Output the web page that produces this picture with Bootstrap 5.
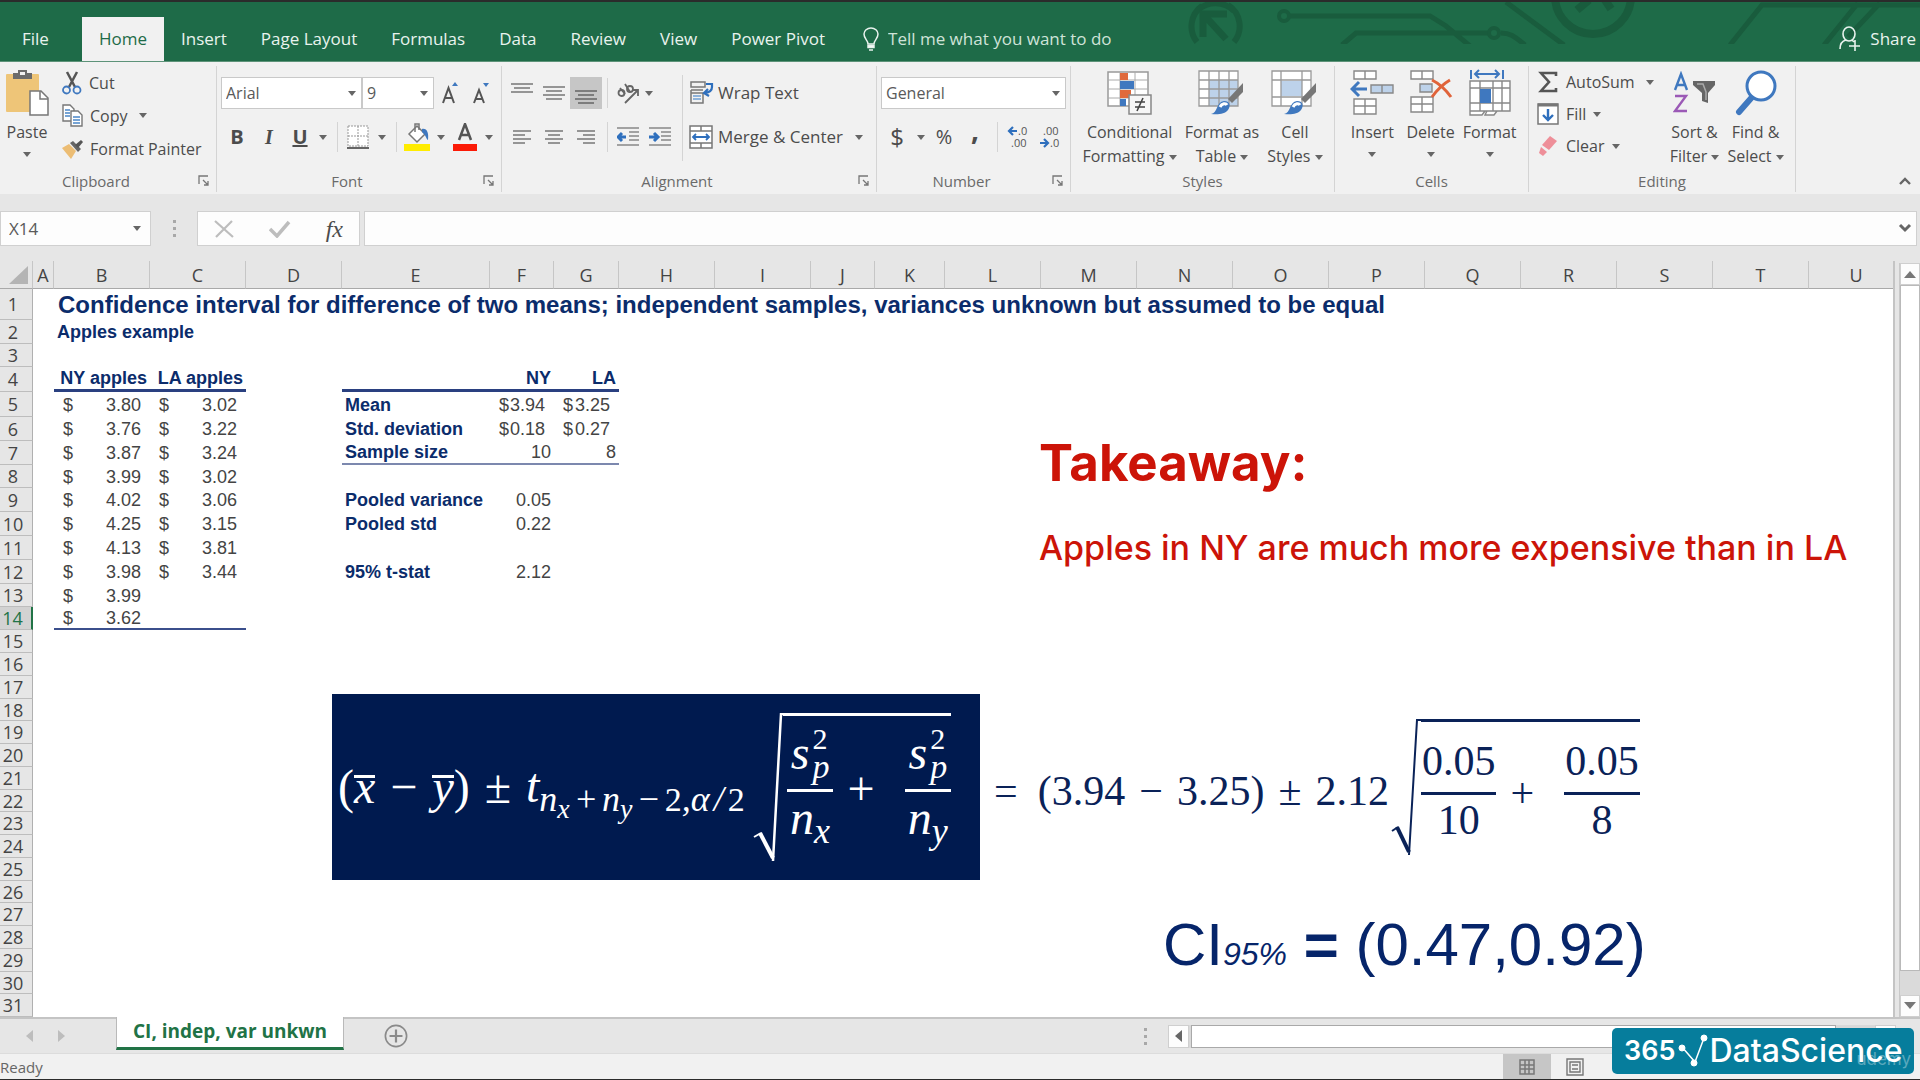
<!DOCTYPE html>
<html lang="en">
<head>
<meta charset="utf-8">
<meta name="viewport" content="width=device-width, initial-scale=1">
<title>Confidence interval workbook</title>
<link href="https://cdn.jsdelivr.net/npm/bootstrap@5.3.0/dist/css/bootstrap.min.css" rel="stylesheet">
<style>
:root{--ui:"Open Sans","Noto Sans",sans-serif;--sheet:"Liberation Sans",Arial,sans-serif;--math:"Liberation Serif","Times New Roman",serif;--navy:#0b2c6b}
body{font-family:var(--ui);font-size:16px;line-height:24px;color:#4c4c4c;background:#e6e6e6;min-height:100vh;overflow:hidden;border-top:2px solid #2b2b2b}
button{font:inherit;color:inherit;background:none;border:0;padding:0}
svg{display:block;flex:none}
/* title strip */
.topstrip{background:#1e6b48;height:60px;color:#e9f3ee;font-size:17px;border-bottom:1px solid #5d9379}
.topstrip .art{position:absolute;right:0;top:0}
.tabs{padding-top:15px;z-index:1}
.tabs .nav-link{color:inherit;padding:0 17px;line-height:44px;border-radius:0}
.tabs .nav-link.file{padding:0 33px 0 22px}
.tabs .nav-link.active{background:#f1f1f1;color:#1e6b48}
.tell{background:none;border:0;color:#cfe3d8;width:260px;padding:0;outline:0}
.tell::placeholder{color:#cfe3d8;opacity:1}
/* ribbon */
.ribbon{background:#f1f1f1;height:132px}
.grp{border-right:1px solid #d4d4d4;margin-top:4px;height:126px;display:flex;flex-direction:column}
.grp .tools{height:108px;display:flex}
.cap{line-height:22px;font-size:15px;color:#6a6a6a;display:flex}
.cap span{flex:1;text-align:center}
.launch{width:24px;display:flex;align-items:center;justify-content:center}
.g-clip{width:217px}.g-font{width:285px}.g-align{width:375px}.g-num{width:194px}.g-style{width:264px}.g-cells{width:194px}.g-edit{width:267px}
.w-paste{width:54px}.w-fontname{width:141px}.w-fontsize{width:72px}.w-fx{width:163px}
.dd{display:inline-block;border:4px solid transparent;border-top:5px solid #666;border-bottom:0;vertical-align:middle}
.big{display:flex;flex-direction:column;align-items:center;text-align:center;white-space:nowrap}
.big .ico{height:54px;display:flex;align-items:center}
.lines button{height:33px;display:flex;align-items:center;white-space:nowrap;gap:7px}
.lines.tight button{height:32px}
.two{padding-top:11px}
.r1{height:32px;display:flex;align-items:center}
.r2{height:40px;margin-top:8px;display:flex;align-items:center}
.w10,.w12,.w16,.w18,.w30,.w32{display:flex;align-items:center;justify-content:center;flex:none;height:32px}
.w10{width:10px}.w12{width:12px}.w16{width:16px}.w18{width:18px}.w30{width:30px}.w32{width:32px}
.vline::before{content:"";width:1px;height:30px;background:#d4d4d4}
.vline.tall::before{height:86px}
.picked{background:#c6c6c6}
.serif-i{font-family:var(--math);font-style:italic}
.wide-lab{font-size:17px}
.combo{position:relative}
.combo .form-select{font:16px var(--ui);height:32px;border:1px solid #c9c9c9;border-radius:0;background:#fff;padding:0 4px;color:#5a5a5a;appearance:none}
.combo .dd{position:absolute;right:6px;top:14px;pointer-events:none}
/* formula bar */
.fbar{padding:17px 3px 0 0;height:67px;align-items:flex-start}
.fbox{background:#fdfdfd;border:1px solid #d0d0d0;height:35px;border-radius:0}
.fbox.form-control{padding:0 8px;font-size:17px;color:#5a5a5a}
.fxbtn{font:italic 24px/30px var(--math)}
.namewrap{width:151px;position:relative}
.namewrap .dd{position:absolute;right:10px;top:15px}
.dots{width:46px;height:35px;display:flex;flex-direction:column;gap:4px;align-items:center;justify-content:center}
.dots i{width:3px;height:3px;background:#a8a8a8}
/* sheet */
.pane{border-right:2px solid #c4c4c4;margin-right:4px;overflow:hidden;background:#fff}
.cells{table-layout:fixed;width:100%;border-collapse:separate;border-spacing:0;font:18px/20px var(--sheet);color:#444}
.cells th{background:#e6e6e6;font-family:var(--ui);font-weight:400;color:#444;text-align:center;padding:0}
.cells thead th{height:28px;border-bottom:1px solid #a9a9a9;border-right:1px solid #c6c6c6}
.cells thead th:last-child{border-right:0;padding-left:10px}
.cells tbody th{border-right:1px solid #b0b0b0;border-bottom:1px solid #bdbdbd;padding-right:6px;line-height:18px}
.cells tbody th.on{background:#d2d2d2;color:#217346;border-right:2px solid #217346}
.cells td{padding:0 3px;white-space:nowrap;overflow:visible}
.h31{height:31px}.h25{height:25px}.h24{height:24px}.h23{height:23px}.h22{height:22px}
.cells td.t1{font-size:24px;font-weight:700;color:var(--navy);padding-left:4px}
.cells td.lab{font-weight:700;color:var(--navy)}
.cells td.r{text-align:right}
.cells td.acc{padding:0 9px}
.cells td.ul3{border-bottom:3px solid #2a4080}
.cells td.ul2{border-bottom:2px solid #7c88ae}
.cells td.ul1{border-bottom:2px solid #3b4f8c}
.c33{width:33px}.c21{width:21px}.c96{width:96px}.c148{width:148px}.c64{width:64px}.c65{width:65px}.c70{width:70px}
/* objects floating over the grid */
.takeaway{position:absolute;left:1039px;top:174px;color:#cc1408;font-family:Inter,"Open Sans",sans-serif;white-space:nowrap}
.takeaway h2{font-size:51px;line-height:56px;font-weight:700;margin:0 0 37px}
.takeaway p{font-size:34px;line-height:40px;font-weight:500;margin:0}
.eq{position:absolute;display:flex;align-items:center;font:42px/42px var(--math);white-space:nowrap}
.eq-sym{left:332px;top:433px;width:648px;height:186px;background:#001a4f;color:#fff;padding-left:6px;font-size:48px}
.eq-num{left:994px;top:458px;height:136px;color:#0a2258}
.it{font-style:italic}
.bar{display:inline-block;line-height:17px;border-top:3px solid}
.op{padding:0 14px}
.eq-sym>.op{padding:0 15px}
.sb{font-size:36px;line-height:0;vertical-align:-9px}
.sb2{font-size:28px;line-height:0;vertical-align:-7px}
.sop{padding:0 4px}
.dg{font-size:30px;font-style:normal}
.sb .dg{font-size:34px}
.rad{border-top:3px solid;display:flex;align-items:flex-start}
.rad .op{align-self:center}
.rad-s{height:148px}.rad-n{height:136px}
.frac{display:flex;flex-direction:column;align-items:center}
.frac .num{border-bottom:3px solid;align-self:stretch;display:flex;justify-content:center;align-items:center}
.frac .den{display:flex;align-items:center}
.rad-s .num{height:76px;padding:0 4px}.rad-s .den{height:52px}
.rad-n .num{height:73px;padding:8px 1px 0}.rad-n .den{height:50px}
.low{padding-top:8px}
.stk{display:flex;flex-direction:column;font-size:34px;line-height:28px;margin-left:3px}
.ci{position:absolute;left:1163px;top:650px;font:60px/68px var(--sheet);color:#06256a;white-space:nowrap}
.ci i{font-size:32px}
/* scroll bars */
.vs{width:21px;flex:none;margin-top:2px;background:#dadada;display:flex;flex-direction:column;border-left:1px solid #c9c9c9}
.vs button,.hs button{background:#fdfdfd;border:1px solid #cfcfcf;display:flex;align-items:center;justify-content:center}
.vs button{height:22px}
.vthumb{background:#fff;border:1px solid #b9b9b9;height:686px}
.vs .end{margin-top:auto}
.tabbar{height:36px;border-top:2px solid #c4c4c4}
.stab{margin-top:-2px;margin-left:22px;width:228px;height:33px;background:#fff;border-bottom:3px solid #217346;border-left:1px solid #b9b9b9;border-right:1px solid #b9b9b9;color:#217346;font-weight:700;font-size:19px;line-height:28px;text-align:center;text-decoration:none;white-space:nowrap}
.navarr{width:94px;padding-left:26px;gap:24px}
.hs{width:728px;height:23px;background:#d9d9d9}
.hs button{width:21px}
.hthumb{width:645px;background:#fff;border:1px solid #a9a9a9;margin-left:2px}
.status{background:#f1f1f1;height:27px;border-top:1px solid #dcdcdc;border-bottom:1px solid #2b2b2b;font-size:15px;color:#666}
.views{margin-right:321px}
.views button{width:48px;height:25px;display:flex;align-items:center;justify-content:center}
.mark365{position:absolute;right:6px;bottom:6px;width:302px;height:46px;background:#067d9c;border-radius:5px;color:#fff;font:600 27px/46px Inter,"Open Sans",sans-serif;display:flex;align-items:center;padding-left:12px;white-space:nowrap}
.mark365 b{font-size:32px;font-weight:500}
.ud{position:absolute;right:3px;bottom:4px;font:400 17px/22px Inter,sans-serif;color:rgba(255,255,255,.35)}
</style>
</head>
<body class="position-relative d-flex flex-column">

<header class="topstrip position-relative d-flex">
  <svg class="art" width="760" height="42" viewBox="1160 2 760 42" fill="none" stroke="#195c3d" stroke-width="5">
    <path d="M1197 42a25 25 0 0 1 5-36M1234 42a25 25 0 0 0-6-37M1198 10c10-9 26-9 36 1" stroke-width="6"/>
    <path d="M1203 37V14h24M1204 15l22 24" stroke-width="7"/>
    <circle cx="1284" cy="16" r="5" stroke-width="4"/><path d="M1289 16h141l16 10 24 20M1342 45l14-12h133M1501 33c10 0 14 4 24 12M1506 2l58 43"/>
    <circle cx="1494" cy="33" r="5" stroke-width="4"/><circle cx="1593" cy="-4" r="38" stroke-width="8"/>
    <path d="M1577 10l12-10M1605 0l6 9" stroke-width="8"/><path d="M1730 45l32-40h170M1824 45l34-42M1848 37l32-34"/>
  </svg>
  <ul class="nav tabs flex-nowrap">
    <li><a class="nav-link file" href="#">File</a></li><li><a class="nav-link active" href="#">Home</a></li><li><a class="nav-link" href="#">Insert</a></li><li><a class="nav-link" href="#">Page Layout</a></li><li><a class="nav-link" href="#">Formulas</a></li><li><a class="nav-link" href="#">Data</a></li><li><a class="nav-link" href="#">Review</a></li><li><a class="nav-link" href="#">View</a></li><li><a class="nav-link" href="#">Power Pivot</a></li>
  </ul>
  <label class="tabs d-flex align-items-center ps-3 ms-1 gap-2">
    <svg width="18" height="24" viewBox="0 0 16 24" fill="none" stroke="#e9f3ee" stroke-width="1.5"><path d="M5 17c0-4-4-5-4-10a7 6 0 0 1 14 0c0 5-4 6-4 10z"/><path d="M5 18.500h6v2H5zM6 23h4" fill="#fff"/></svg>
    <input class="tell" type="text" placeholder="Tell me what you want to do" aria-label="Tell me what you want to do">
  </label>
  <button class="tabs ms-auto d-flex align-items-center gap-2 pe-1" type="button">
    <svg width="24" height="26" viewBox="0 0 24 26" fill="none" stroke="#e9f3ee" stroke-width="1.600"><ellipse cx="11" cy="8" rx="6" ry="7"/><path d="M8 14c-4 1-6 4-6 9M14 14l2 2M17 14v11M11 20h11"/></svg>
    Share
  </button>
</header>

<section class="ribbon d-flex" aria-label="Ribbon">
  <div class="grp g-clip">
    <div class="tools">
      <button class="big w-paste" type="button"><span class="ico"><svg width="44" height="48" viewBox="0 0 44 48"><rect x="1" y="5" width="33" height="38" rx="1" fill="#eec578"/><path d="M8 4h5V1h9v3h5v6H8z" fill="#6b6b6b"/><rect x="15" y="3" width="5" height="3" fill="#f1f1f1"/><path d="M25 22h11l7 7v17H25z" fill="#fff" stroke="#777" stroke-width="1.500"/><path d="M35 22v8h8" fill="none" stroke="#777" stroke-width="1.500"/></svg></span>Paste<span class="dd mt-2"></span></button>
      <div class="lines ps-2">
        <button type="button"><svg width="20" height="24" viewBox="0 0 20 24" fill="none"><path d="M5 1l8 15M15 1L7 16" stroke="#555" stroke-width="2.500"/><circle cx="4.500" cy="19" r="3.500" stroke="#3f78bf" stroke-width="1.800"/><circle cx="15" cy="19" r="3.500" stroke="#3f78bf" stroke-width="1.800"/></svg>Cut</button>
        <button type="button"><svg width="21" height="24" viewBox="0 0 21 24" fill="#fff" stroke="#777" stroke-width="1.400"><path d="M1 1h7l4 4v12H1z"/><path d="M9 7h7l4 4v11H9z"/><path d="M3 6h5M3 9h5M3 12h5M11 13h7M11 16h7M11 19h7" stroke="#4b86c8"/></svg>Copy<span class="dd ms-1"></span></button>
        <button type="button"><svg width="21" height="20" viewBox="0 0 21 20"><path d="M0 9l7-4 7 7-5 8z" fill="#ecbd74"/><path d="M8 4l3-2 8 8-3 3z" fill="#666"/><path d="M13 6l6-5 2 2-5 6z" fill="#555"/></svg>Format Painter</button>
      </div>
    </div>
    <div class="cap"><span>Clipboard</span><button class="launch" type="button" aria-label="Clipboard settings"><svg width="12" height="12" viewBox="0 0 12 12" fill="none" stroke="#777" stroke-width="1.300"><path d="M1 9V1h9M5 5l5 5M10 6v4H6"/></svg></button></div>
  </div>

  <div class="grp g-font">
    <div class="tools flex-column two px-1">
      <div class="r1">
        <div class="combo w-fontname"><select class="form-select" aria-label="Font"><option>Arial</option></select><span class="dd"></span></div>
        <div class="combo w-fontsize"><select class="form-select" aria-label="Font size"><option>9</option></select><span class="dd"></span></div>
        <button class="w32" type="button" aria-label="Grow font"><svg width="18" height="24" viewBox="0 0 18 24" fill="none" stroke="#555" stroke-width="2"><path d="M2 22L7.500 7 13 22M4 17h7"/><path d="M11 5l3-4 3 4z" fill="#3f78bf" stroke="none"/></svg></button>
        <button class="w30" type="button" aria-label="Shrink font"><svg width="18" height="24" viewBox="0 0 18 24" fill="none" stroke="#555" stroke-width="2"><path d="M2 22L7 9l5 13M4 18h6"/><path d="M11 2h6l-3 4z" fill="#3f78bf" stroke="none"/></svg></button>
      </div>
      <div class="r2">
        <button class="w32 fw-bold fs-5" type="button">B</button><button class="w32 fs-5 fw-bold serif-i" type="button">I</button><button class="w30 fw-bold fs-5 text-decoration-underline" type="button">U</button><span class="w16"><i class="dd"></i></span><span class="w12 vline"></span>
        <button class="w30" type="button" aria-label="Borders"><svg width="22" height="24" viewBox="0 0 22 24" fill="#fff" stroke="#999"><path d="M1 1h20v20H1z" stroke-dasharray="2 1"/><path d="M11 1v20M1 11h20" stroke-dasharray="2 1"/><path d="M0 23h22" stroke="#666" stroke-width="2"/></svg></button><span class="w18"><i class="dd"></i></span><span class="w10 vline"></span>
        <button class="w32" type="button" aria-label="Fill colour"><svg width="26" height="28" viewBox="0 0 26 28"><path d="M5 11l8-8 8 8-8 8z" fill="#fff" stroke="#777" stroke-width="1.500"/><path d="M11 9V1h4v6" fill="none" stroke="#777" stroke-width="1.500"/><path d="M18 6c5-1 7 4 6 11-2-1-2-5-6-8z" fill="#3f78bf"/><path d="M0 21h26v7H0z" fill="#ffec00"/></svg></button><span class="w16"><i class="dd"></i></span>
        <button class="w32" type="button" aria-label="Font colour"><svg width="24" height="28" viewBox="0 0 24 28"><path d="M6 17l6-16 6 16M8 12h8" fill="none" stroke="#555" stroke-width="2.500"/><path d="M0 21h24v7H0z" fill="#fb1a06"/></svg></button><span class="w16"><i class="dd"></i></span>
      </div>
    </div>
    <div class="cap"><span>Font</span><button class="launch" type="button" aria-label="Font settings"><svg width="12" height="12" viewBox="0 0 12 12" fill="none" stroke="#777" stroke-width="1.300"><path d="M1 9V1h9M5 5l5 5M10 6v4H6"/></svg></button></div>
  </div>

  <div class="grp g-align">
    <div class="tools ps-1">
      <div class="two">
        <div class="r1">
          <button class="w32" type="button" aria-label="Top align"><svg width="22" height="20" viewBox="0 0 22 20" stroke="#777" stroke-width="1.600"><path d="M0 1h22M3 5h16M0 9h22"/></svg></button>
          <button class="w32" type="button" aria-label="Middle align"><svg width="22" height="20" viewBox="0 0 22 20" stroke="#777" stroke-width="1.600"><path d="M0 4h22M3 8h16M0 12h22M3 16h16"/></svg></button>
          <button class="w32 picked" type="button" aria-label="Bottom align"><svg width="22" height="22" viewBox="0 0 22 22" stroke="#666" stroke-width="1.600"><path d="M0 9h22M3 13h16M0 17h22M3 21h16"/></svg></button>
          <span class="w10 vline"></span>
          <button class="w32" type="button" aria-label="Orientation"><svg width="24" height="24" viewBox="0 0 24 24" fill="none" stroke="#666" stroke-width="1.800"><circle cx="5.500" cy="12" r="3"/><path d="M4 7l5 6M9 3l5 8"/><circle cx="14" cy="8" r="3"/><path d="M9 22L22 9M16 9h6v6"/></svg></button><span class="w10"><i class="dd"></i></span>
        </div>
        <div class="r2">
          <button class="w32" type="button" aria-label="Align left"><svg width="18" height="14" viewBox="0 0 18 14" stroke="#777" stroke-width="1.600"><path d="M0 1h18M0 5h12M0 9h18M0 13h12"/></svg></button>
          <button class="w32" type="button" aria-label="Center"><svg width="18" height="14" viewBox="0 0 18 14" stroke="#777" stroke-width="1.600"><path d="M0 1h18M3 5h12M0 9h18M3 13h12"/></svg></button>
          <button class="w32" type="button" aria-label="Align right"><svg width="18" height="14" viewBox="0 0 18 14" stroke="#777" stroke-width="1.600"><path d="M0 1h18M6 5h12M0 9h18M6 13h12"/></svg></button>
          <span class="w10 vline"></span>
          <button class="w32" type="button" aria-label="Decrease indent"><svg width="22" height="20" viewBox="0 0 22 20" stroke="#888" stroke-width="1.600"><path d="M0 1h22M12 5h10M12 9h10M12 13h10M0 18h22"/><path d="M1 10h8M5 6l-4 4 4 4" fill="none" stroke="#2e6fbd" stroke-width="3"/></svg></button>
          <button class="w32" type="button" aria-label="Increase indent"><svg width="22" height="20" viewBox="0 0 22 20" stroke="#888" stroke-width="1.600"><path d="M0 1h22M12 5h10M12 9h10M12 13h10M0 18h22"/><path d="M0 10h8M5 6l4 4-4 4" fill="none" stroke="#2e6fbd" stroke-width="3"/></svg></button>
        </div>
      </div>
      <span class="w12 vline tall h-100"></span>
      <div class="two wide-lab">
        <div class="r1"><button class="d-flex align-items-center gap-1" type="button"><svg width="26" height="24" viewBox="0 0 26 24" fill="none" stroke="#777" stroke-width="1.500"><path d="M3 1h14v5H3zM3 9h12M3 12h12v10H3V9"/><path d="M5 15h8M5 18h8" stroke="#6d9ed3"/><path d="M18 3h6v3q0 5-7 6M20 8l-4 4 5 3" stroke="#2e6fbd" stroke-width="2.200"/></svg>Wrap Text</button></div>
        <div class="r2"><button class="d-flex align-items-center gap-1" type="button"><svg width="26" height="24" viewBox="0 0 26 24" fill="#fff" stroke="#777" stroke-width="1.500"><path d="M2 1h22v22H2zM2 6h22M2 18h22M13 1v5M13 18v5"/><path d="M5 12h16M8 9l-3 3 3 3M18 9l3 3-3 3" fill="none" stroke="#2e6fbd" stroke-width="1.800"/></svg>Merge &amp; Center<i class="dd ms-2"></i></button></div>
      </div>
    </div>
    <div class="cap"><span>Alignment</span><button class="launch" type="button" aria-label="Alignment settings"><svg width="12" height="12" viewBox="0 0 12 12" fill="none" stroke="#777" stroke-width="1.300"><path d="M1 9V1h9M5 5l5 5M10 6v4H6"/></svg></button></div>
  </div>

  <div class="grp g-num">
    <div class="tools flex-column two px-1">
      <div class="r1"><div class="combo w-100"><select class="form-select" aria-label="Number format"><option>General</option></select><span class="dd"></span></div></div>
      <div class="r2">
        <button class="w32 fs-4" type="button">$</button><span class="w16"><i class="dd"></i></span><button class="w30 fs-5" type="button">%</button><button class="w32 fs-3 fw-bold pb-3" type="button">,</button><span class="w12 vline"></span>
        <button class="w32" type="button" aria-label="Increase decimal"><svg width="26" height="26" viewBox="0 0 26 26" font-family="Open Sans" font-size="11" fill="#555"><text x="12" y="11">.0</text><text x="5" y="23">.00</text><path d="M3 7h8M7 3L3 7l4 4" fill="none" stroke="#2e6fbd" stroke-width="2.200"/></svg></button>
        <button class="w32" type="button" aria-label="Decrease decimal"><svg width="26" height="26" viewBox="0 0 26 26" font-family="Open Sans" font-size="11" fill="#555"><text x="5" y="11">.00</text><text x="12" y="23">.0</text><path d="M2 19h8M6 15l4 4-4 4" fill="none" stroke="#2e6fbd" stroke-width="2.200"/></svg></button>
      </div>
    </div>
    <div class="cap"><span>Number</span><button class="launch" type="button" aria-label="Number settings"><svg width="12" height="12" viewBox="0 0 12 12" fill="none" stroke="#777" stroke-width="1.300"><path d="M1 9V1h9M5 5l5 5M10 6v4H6"/></svg></button></div>
  </div>

  <div class="grp g-style">
    <div class="tools justify-content-center gap-2">
      <button class="big" type="button"><span class="ico"><svg width="46" height="44" viewBox="0 0 46 44"><path d="M1 1h40v34H1z" fill="#fff" stroke="#999" stroke-width="1.500"/><path d="M1 9h40M1 18h40M1 27h40M13 1v34M28 1v34" stroke="#aaa"/><path d="M13 2h8v7h-8zM13 19h11v8H13z" fill="#e06a3c"/><path d="M13 10h14v8H13zM13 28h6v7h-6z" fill="#3f78bf"/><path d="M22 24h22v19H22z" fill="#f6f6f6" stroke="#888" stroke-width="1.500"/><path d="M28 31h10M28 36h10M36 27l-6 13" stroke="#444" stroke-width="1.600"/></svg></span><span>Conditional<br>Formatting <i class="dd"></i></span></button>
      <button class="big" type="button"><span class="ico"><svg width="48" height="46" viewBox="0 0 48 46"><path d="M1 1h39v35H1z" fill="#fff"/><path d="M11 10h29v26H11z" fill="#bdd2ea"/><path d="M1 1h39v35H1zM1 10h39M1 19h39M1 28h39M11 1v35M21 1v35M31 1v35" fill="none" stroke="#999" stroke-width="1.300"/><path d="M45 13v9L34 33l-4-4z" fill="#777"/><path d="M13 44c7-1 5-12 13-13 6 0 7 5 4 9-3 4-10 5-17 4z" fill="#3f78bf"/><path d="M22 37c2-4 6-4 7-2" stroke="#fff" stroke-width="3" fill="none"/></svg></span><span>Format as<br>Table <i class="dd"></i></span></button>
      <button class="big" type="button"><span class="ico"><svg width="48" height="46" viewBox="0 0 48 46"><path d="M1 1h39v35H1z" fill="#fff"/><path d="M10 11h21v15H10z" fill="#bdd2ea"/><path d="M1 1h39v35H1zM1 10h39M1 27h39M10 1v35M31 1v35" fill="none" stroke="#999" stroke-width="1.300"/><path d="M45 13v9L34 33l-4-4z" fill="#777"/><path d="M13 44c7-1 5-12 13-13 6 0 7 5 4 9-3 4-10 5-17 4z" fill="#3f78bf"/><path d="M22 37c2-4 6-4 7-2" stroke="#fff" stroke-width="3" fill="none"/></svg></span><span>Cell<br>Styles <i class="dd"></i></span></button>
    </div>
    <div class="cap"><span>Styles</span></div>
  </div>

  <div class="grp g-cells">
    <div class="tools justify-content-center gap-2">
      <button class="big px-1" type="button"><span class="ico"><svg width="44" height="46" viewBox="0 0 44 46" fill="#fff" stroke="#888" stroke-width="1.400"><path d="M4 1h22v8H4zM15 1v8M4 29h22v15H4zM15 29v15M4 36h22"/><path d="M21 15h22v8H21zM32 15v8" fill="#bdd2ea"/><path d="M2 19h15M9 12l-7 7 7 7" fill="none" stroke="#3f78bf" stroke-width="3"/></svg></span>Insert<span class="dd mt-2"></span></button>
      <button class="big" type="button"><span class="ico"><svg width="44" height="46" viewBox="0 0 44 46" fill="#fff" stroke="#888" stroke-width="1.400"><path d="M2 1h22v8H2zM13 1v8M2 27h22v15H2zM13 27v15M2 34h22"/><path d="M11 14h12v8H11z" fill="#bdd2ea"/><path d="M23 10c6 3 14 10 19 17M41 10c-7 4-13 10-18 17" fill="none" stroke="#e0633a" stroke-width="3"/></svg></span>Delete<span class="dd mt-2"></span></button>
      <button class="big" type="button"><span class="ico"><svg width="42" height="48" viewBox="0 0 42 48" fill="#fff" stroke="#888" stroke-width="1.400"><path d="M1 12h40v30H1zM1 19h40M1 34h40M11 12v30M24 12v30M33 12v30M1 42v4h12l3-4M18 42l-2 4h9l3-4"/><path d="M11 20h11v14H11z" fill="#3f78bf" stroke="none"/><path d="M2 1v9M34 1v9M6 5h24M10 1L6 5l4 4M26 1l4 4-4 4" fill="none" stroke="#3f78bf" stroke-width="2"/></svg></span>Format<span class="dd mt-2"></span></button>
    </div>
    <div class="cap"><span>Cells</span></div>
  </div>

  <div class="grp g-edit">
    <div class="tools">
      <div class="lines tight ps-2 pe-3">
        <button type="button"><svg width="22" height="22" viewBox="0 0 22 22" fill="none" stroke="#555" stroke-width="2.600"><path d="M19 5V2H4l8 9-8 9h15v-3"/></svg>AutoSum<span class="dd ms-1"></span></button>
        <button type="button"><svg width="22" height="22" viewBox="0 0 22 22" fill="#fff" stroke="#777" stroke-width="1.500"><path d="M1 1h20v20H1z"/><path d="M1 2h20" stroke-width="3"/><path d="M11 6v11M6 12l5 5 5-5" fill="none" stroke="#2e6fbd" stroke-width="2.400"/></svg>Fill<span class="dd"></span></button>
        <button type="button"><svg width="22" height="20" viewBox="0 0 22 20"><path d="M13 0l7 5-8 9-7-5z" fill="#ee8f99"/><path d="M4 11l6 5-4 4-4-3z" fill="#ee8f99"/></svg>Clear<span class="dd"></span></button>
      </div>
      <div class="d-flex gap-2">
        <button class="big" type="button"><span class="ico"><svg width="44" height="44" viewBox="0 0 44 44" fill="none" stroke-width="2.400"><path d="M2 19L8 3l6 16M4 14h8" stroke="#3f78bf"/><path d="M2 25h11L2 40h12" stroke="#9b59b6"/><path d="M20 10h22v4l-7 8v10l-6-2v-8l-9-8z" fill="#666"/><path d="M24 13h6l3 8v8" stroke="#aaa" stroke-width="1.500"/></svg></span><span>Sort &amp;<br>Filter <i class="dd"></i></span></button>
        <button class="big" type="button"><span class="ico"><svg width="42" height="46" viewBox="0 0 42 46" fill="#fff" stroke="#3f78bf"><path d="M18 26L4 42" stroke-width="6" stroke-linecap="round"/><circle cx="26" cy="16" r="14" stroke-width="3"/></svg></span><span>Find &amp;<br>Select <i class="dd"></i></span></button>
      </div>
    </div>
    <div class="cap"><span>Editing</span></div>
  </div>
  <button class="ms-auto align-self-end px-2 pb-2" type="button" aria-label="Collapse the ribbon"><svg width="14" height="10" viewBox="0 0 14 10" fill="none" stroke="#666" stroke-width="2.400"><path d="M2 8l5-5 5 5"/></svg></button>
</section>

<div class="fbar d-flex">
  <div class="namewrap"><input class="form-control fbox" aria-label="Name box" value="X14"><span class="dd"></span></div>
  <div class="dots"><i></i><i></i><i></i></div>
  <div class="fbox w-fx d-flex align-items-center justify-content-between px-3">
    <button type="button" aria-label="Cancel"><svg width="20" height="18" viewBox="0 0 20 18" stroke="#bdbdbd" stroke-width="2.200"><path d="M1 1l18 16M18 1L2 17"/></svg></button>
    <button type="button" aria-label="Enter"><svg width="22" height="18" viewBox="0 0 22 18" fill="none" stroke="#bdbdbd" stroke-width="3.500"><path d="M1 9l7 7L20 2"/></svg></button>
    <button type="button" class="fxbtn">fx</button>
  </div>
  <div class="position-relative flex-grow-1 ms-1"><input class="form-control fbox" aria-label="Formula bar"><svg class="position-absolute end-0 top-0 mt-2 me-1" width="16" height="16" viewBox="0 0 16 16" fill="none" stroke="#666" stroke-width="3"><path d="M3 6l5 5 5-5"/></svg></div>
</div>

<main class="d-flex">
  <div class="pane flex-grow-1 position-relative">
    <table class="cells">
      <colgroup><col class="c33"><col class="c21"><col class="c96"><col class="c96"><col class="c96"><col class="c148"><col class="c64"><col class="c65"><col class="c96"><col class="c96"><col class="c64"><col class="c70"><col class="c96"><col class="c96"><col class="c96"><col class="c96"><col class="c96"><col class="c96"><col class="c96"><col class="c96"><col class="c96"><col></colgroup>
      <thead><tr id="letters"><th><svg class="ms-2" width="20" height="20" viewBox="0 0 20 20"><path d="M20 1v18H1z" fill="#b4b4b4"/></svg></th></tr></thead>
      <tbody id="rows"></tbody>
    </table>

    <section class="takeaway"><h2>Takeaway:</h2><p>Apples in NY are much more expensive than in LA</p></section>

    <div class="eq eq-sym">
      <span>(<span class="it bar">x</span></span><span class="op">−</span><span><span class="it bar">y</span>)</span><span class="op">±</span>
      <span class="it">t<span class="sb">n<span class="sb2">x</span><span class="sop">+</span>n<span class="sb2">y</span><span class="sop">−</span><span class="dg">2</span>,α<span class="sop">/</span><span class="dg">2</span></span></span>
      <svg class="ms-2" width="30" height="148" viewBox="0 0 30 148" fill="none" stroke="#fff"><path d="M1 124l7-4" stroke-width="2"/><path d="M7 120l13 25" stroke-width="4"/><path d="M20 148L28 1h2" stroke-width="2.500"/></svg>
      <div class="rad rad-s"><div class="frac ms-1"><div class="num"><span class="it">s</span><span class="stk"><span class="dg">2</span><span class="it">p</span></span></div><div class="den it"><span>n<span class="sb">x</span></span></div></div><span class="op">+</span><div class="frac ms-3"><div class="num"><span class="it">s</span><span class="stk"><span class="dg">2</span><span class="it">p</span></span></div><div class="den it"><span>n<span class="sb">y</span></span></div></div></div>
    </div>

    <div class="eq eq-num">
      <div class="low"><span>=</span><span class="ps-3 ms-1">(3.94</span><span class="op">−</span><span>3.25)</span><span class="op">±</span><span>2.12</span></div>
      <svg width="32" height="136" viewBox="0 0 32 136" fill="none" stroke="#0a2258"><path d="M3 112l6-4" stroke-width="2"/><path d="M8 108l12 25" stroke-width="4"/><path d="M20 136L28 1h4" stroke-width="2"/></svg>
      <div class="rad rad-n"><div class="frac"><div class="num">0.05</div><div class="den">10</div></div><span class="op low">+</span><div class="frac ms-3"><div class="num">0.05</div><div class="den">8</div></div></div>
    </div>

    <div class="ci">CI<i>95%</i> <b>=</b> (0.47,0.92)</div>
  </div>
  <div class="vs"><button type="button" aria-label="Scroll up"><svg width="12" height="8" viewBox="0 0 12 8"><path d="M0 8l6-7 6 7z" fill="#777"/></svg></button><div class="vthumb"></div><button class="end" type="button" aria-label="Scroll down"><svg width="12" height="8" viewBox="0 0 12 8"><path d="M0 0l6 7 6-7z" fill="#777"/></svg></button></div>
</main>

<div class="tabbar d-flex">
  <div class="navarr d-flex align-items-center"><svg width="8" height="12" viewBox="0 0 8 12"><path d="M7 0v12L0 6z" fill="#bdbdbd"/></svg><svg width="8" height="12" viewBox="0 0 8 12"><path d="M0 0v12l7-6z" fill="#bdbdbd"/></svg></div>
  <a class="stab" href="#">CI, indep, var unkwn</a>
  <button class="ms-4 ps-3" type="button" aria-label="New sheet"><svg width="24" height="26" viewBox="0 0 26 26" fill="none" stroke="#8a8a8a" stroke-width="1.800"><circle cx="13" cy="13" r="11.500"/><path d="M13 6v14M6 13h14" stroke-width="2.400"/></svg></button>
  <div class="ms-auto d-flex align-items-center me-4"><div class="dots h-100"><i></i><i></i><i></i></div><div class="hs d-flex"><button type="button" aria-label="Scroll left"><svg width="8" height="12" viewBox="0 0 8 12"><path d="M7 0v12L0 6z" fill="#666"/></svg></button><div class="hthumb"></div><button class="ms-auto" type="button" aria-label="Scroll right"></button></div></div>
</div>

<footer class="status d-flex align-items-center justify-content-between">
  <span>Ready</span>
  <div class="views d-flex"><button class="picked" type="button" aria-label="Normal view"><svg width="16" height="16" viewBox="0 0 16 16" fill="none" stroke="#777" stroke-width="1.500"><path d="M1 1h14v14H1zM1 6h14M1 10h14M6 1v14M10 1v14"/></svg></button><button type="button" aria-label="Page layout view"><svg width="18" height="18" viewBox="0 0 18 18" fill="none" stroke="#777" stroke-width="1.400"><path d="M1 1h16v16H1zM4 4h10v10H4zM6 7h6M6 11h6"/></svg></button></div>
</footer>

<div class="mark365">365<svg width="34" height="34" viewBox="0 0 34 34" fill="#fff" stroke="#fff"><path d="M7 13l13 15L29 4" fill="none" stroke-width="1.500"/><circle cx="7" cy="14" r="3"/><circle cx="19" cy="29" r="3"/><circle cx="29" cy="4" r="3"/></svg><b>DataScience</b><span class="ud">udemy</span></div>

<script>
const letters = "ABCDEFGHIJKLMNOPQRSTU".split("");
document.getElementById("letters").insertAdjacentHTML("beforeend", letters.map(l => `<th scope="col">${l}</th>`).join(""));
const ny = ["3.80","3.76","3.87","3.99","4.02","4.25","4.13","3.98","3.99","3.62"];
const la = ["3.02","3.22","3.24","3.02","3.06","3.15","3.81","3.44"];
const heights = [31,24,23,25,25,24,24,23,24,24,24,24,23,23,23,23,23,22,23,23,23,22,23,23,23,22,23,23,23,22,23];
const cells = {
  B1:["t1","Confidence interval for difference of two means; independent samples, variances unknown but assumed to be equal"],
  B2:["lab","Apples example"], B4:["lab r ul3","NY apples"], C4:["lab r ul3","LA apples"],
  E4:["ul3",""], F4:["lab r ul3","NY"], G4:["lab r ul3","LA"],
  E5:["lab","Mean"], E6:["lab","Std. deviation"], E7:["lab ul2","Sample size"],
  F5:["acc","$3.94"], G5:["acc","$3.25"], F6:["acc","$0.18"], G6:["acc","$0.27"], F7:["r ul2","10"], G7:["r ul2","8"],
  E9:["lab","Pooled variance"], F9:["r","0.05"], E10:["lab","Pooled std"], F10:["r","0.22"],
  E12:["lab","95% t-stat"], F12:["r","2.12"], C14:["ul1",""]
};
ny.forEach((v,i) => cells["B"+(i+5)] = ["acc"+(i===9?" ul1":""), "$"+v]);
la.forEach((v,i) => cells["C"+(i+5)] = ["acc", "$"+v]);
document.getElementById("rows").innerHTML = heights.map((h,i) => {
  const n = i+1;
  return `<tr class="h${h}"><th scope="row"${n===14?' class="on"':''}>${n}</th>` + letters.map(l => {
    const c = cells[l+n];
    if (!c) return "<td></td>";
    const body = c[1][0]==="$" ? `<div class="d-flex justify-content-between"><span>$</span><span>${c[1].slice(1)}</span></div>` : c[1];
    return `<td class="${c[0]}">${body}</td>`;
  }).join("") + "</tr>";
}).join("");
</script>
<script src="https://cdn.jsdelivr.net/npm/bootstrap@5.3.0/dist/js/bootstrap.bundle.min.js"></script>
</body>
</html>
